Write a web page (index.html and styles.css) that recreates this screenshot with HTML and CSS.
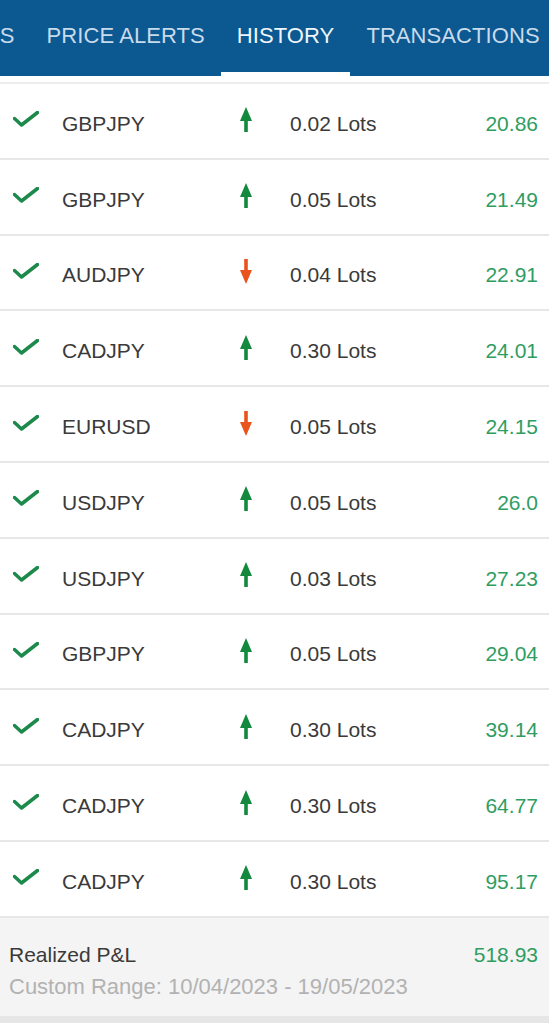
FILE: index.html
```html
<!DOCTYPE html>
<html lang="en">
<head>
    <meta charset="UTF-8">
    <meta name="viewport" content="width=device-width, initial-scale=1.0">
    <title>History</title>
    <link rel="stylesheet" href="styles.css">
</head>
<body>
    <header class="tabbar">
        <nav class="tabs">
            <div class="tab tab-first">POSITIONS</div>
            <div class="tab">PRICE ALERTS</div>
            <div class="tab active">HISTORY</div>
            <div class="tab">TRANSACTIONS</div>
        </nav>
    </header>

    <div class="history-list">
        <div class="trade">
            <svg class="check" viewBox="0 0 26 16"><polyline points="1.5,7.5 8.5,14 24.5,1.5"/></svg>
            <span class="symbol">GBPJPY</span>
            <svg class="dir up" viewBox="0 0 12 25"><polygon points="6,0 12,14 7.8,14 7.8,25 4.2,25 4.2,14 0,14"/></svg>
            <span class="lots">0.02 Lots</span>
            <span class="pnl">20.86</span>
        </div>
        <div class="trade">
            <svg class="check" viewBox="0 0 26 16"><polyline points="1.5,7.5 8.5,14 24.5,1.5"/></svg>
            <span class="symbol">GBPJPY</span>
            <svg class="dir up" viewBox="0 0 12 25"><polygon points="6,0 12,14 7.8,14 7.8,25 4.2,25 4.2,14 0,14"/></svg>
            <span class="lots">0.05 Lots</span>
            <span class="pnl">21.49</span>
        </div>
        <div class="trade">
            <svg class="check" viewBox="0 0 26 16"><polyline points="1.5,7.5 8.5,14 24.5,1.5"/></svg>
            <span class="symbol">AUDJPY</span>
            <svg class="dir down" viewBox="0 0 12 25"><polygon points="6,25 12,11 7.8,11 7.8,0 4.2,0 4.2,11 0,11"/></svg>
            <span class="lots">0.04 Lots</span>
            <span class="pnl">22.91</span>
        </div>
        <div class="trade">
            <svg class="check" viewBox="0 0 26 16"><polyline points="1.5,7.5 8.5,14 24.5,1.5"/></svg>
            <span class="symbol">CADJPY</span>
            <svg class="dir up" viewBox="0 0 12 25"><polygon points="6,0 12,14 7.8,14 7.8,25 4.2,25 4.2,14 0,14"/></svg>
            <span class="lots">0.30 Lots</span>
            <span class="pnl">24.01</span>
        </div>
        <div class="trade">
            <svg class="check" viewBox="0 0 26 16"><polyline points="1.5,7.5 8.5,14 24.5,1.5"/></svg>
            <span class="symbol">EURUSD</span>
            <svg class="dir down" viewBox="0 0 12 25"><polygon points="6,25 12,11 7.8,11 7.8,0 4.2,0 4.2,11 0,11"/></svg>
            <span class="lots">0.05 Lots</span>
            <span class="pnl">24.15</span>
        </div>
        <div class="trade">
            <svg class="check" viewBox="0 0 26 16"><polyline points="1.5,7.5 8.5,14 24.5,1.5"/></svg>
            <span class="symbol">USDJPY</span>
            <svg class="dir up" viewBox="0 0 12 25"><polygon points="6,0 12,14 7.8,14 7.8,25 4.2,25 4.2,14 0,14"/></svg>
            <span class="lots">0.05 Lots</span>
            <span class="pnl">26.0</span>
        </div>
        <div class="trade">
            <svg class="check" viewBox="0 0 26 16"><polyline points="1.5,7.5 8.5,14 24.5,1.5"/></svg>
            <span class="symbol">USDJPY</span>
            <svg class="dir up" viewBox="0 0 12 25"><polygon points="6,0 12,14 7.8,14 7.8,25 4.2,25 4.2,14 0,14"/></svg>
            <span class="lots">0.03 Lots</span>
            <span class="pnl">27.23</span>
        </div>
        <div class="trade">
            <svg class="check" viewBox="0 0 26 16"><polyline points="1.5,7.5 8.5,14 24.5,1.5"/></svg>
            <span class="symbol">GBPJPY</span>
            <svg class="dir up" viewBox="0 0 12 25"><polygon points="6,0 12,14 7.8,14 7.8,25 4.2,25 4.2,14 0,14"/></svg>
            <span class="lots">0.05 Lots</span>
            <span class="pnl">29.04</span>
        </div>
        <div class="trade">
            <svg class="check" viewBox="0 0 26 16"><polyline points="1.5,7.5 8.5,14 24.5,1.5"/></svg>
            <span class="symbol">CADJPY</span>
            <svg class="dir up" viewBox="0 0 12 25"><polygon points="6,0 12,14 7.8,14 7.8,25 4.2,25 4.2,14 0,14"/></svg>
            <span class="lots">0.30 Lots</span>
            <span class="pnl">39.14</span>
        </div>
        <div class="trade">
            <svg class="check" viewBox="0 0 26 16"><polyline points="1.5,7.5 8.5,14 24.5,1.5"/></svg>
            <span class="symbol">CADJPY</span>
            <svg class="dir up" viewBox="0 0 12 25"><polygon points="6,0 12,14 7.8,14 7.8,25 4.2,25 4.2,14 0,14"/></svg>
            <span class="lots">0.30 Lots</span>
            <span class="pnl">64.77</span>
        </div>
        <div class="trade">
            <svg class="check" viewBox="0 0 26 16"><polyline points="1.5,7.5 8.5,14 24.5,1.5"/></svg>
            <span class="symbol">CADJPY</span>
            <svg class="dir up" viewBox="0 0 12 25"><polygon points="6,0 12,14 7.8,14 7.8,25 4.2,25 4.2,14 0,14"/></svg>
            <span class="lots">0.30 Lots</span>
            <span class="pnl">95.17</span>
        </div>
    </div>

    <footer class="summary">
        <div class="summary-row">
            <span class="summary-label">Realized P&amp;L</span>
            <span class="summary-value">518.93</span>
        </div>
        <div class="summary-range">Custom Range: 10/04/2023 - 19/05/2023</div>
    </footer>
    <div class="bottom-strip"></div>
</body>
</html>
```

FILE: styles.css
```css
:root {
    --blue: #0c5891;
    --text: #3a3a3a;
    --green: #2f9d62;
    --check: #1d8a4c;
    --up: #12893d;
    --down: #e9531d;
    --line: #e7e7e7;
}

* {
    box-sizing: border-box;
    margin: 0;
    padding: 0;
}

body {
    font-family: 'Liberation Sans', Arial, sans-serif;
    color: var(--text);
    background-color: white;
    width: 549px;
    height: 1023px;
    overflow: hidden;
}

/* tab strip is scrolled sideways, only the tail of the first tab shows */
.tabbar {
    background-color: var(--blue);
    height: 76px;
    overflow: hidden;
}

.tabs {
    display: flex;
    height: 76px;
    margin-left: -122px;
}

.tab {
    flex: none;
    padding: 0 16px;
    height: 76px;
    line-height: 72px;
    font-size: 22px;
    letter-spacing: 0.08px;
    color: #c8dbeb;
    border-bottom: 4px solid transparent;
    white-space: nowrap;
}

.tab.active {
    color: #eef6fb;
    border-bottom-color: white;
}

.history-list {
    margin-top: 6px;
    border-top: 2px solid #ededed;
}

.trade {
    display: grid;
    grid-template-columns: 49px 178px 50px 1fr auto;
    align-items: center;
    height: 75.8px;
    padding: 0 11px 0 13px;
    border-bottom: 2px solid var(--line);
    font-size: 21px;
}

.trade span {
    padding-top: 6px;
}

.check {
    width: 26px;
    height: 16px;
    margin-top: -3px;
    fill: none;
    stroke: var(--check);
    stroke-width: 3.5;
    stroke-linecap: round;
    stroke-linejoin: round;
}

.dir {
    width: 12px;
    height: 25px;
    margin-top: -2px;
}

.dir.up {
    fill: var(--up);
}

.dir.down {
    fill: var(--down);
}

.pnl {
    color: var(--green);
    text-align: right;
}

.summary {
    background-color: #f4f4f4;
    height: 98px;
    padding: 22px 11px 0 9px;
    font-size: 21px;
}

.summary-row {
    display: flex;
    justify-content: space-between;
    line-height: 30px;
}

.summary-value {
    color: var(--green);
}

.summary-range {
    margin-top: 2px;
    line-height: 30px;
    font-size: 22px;
    color: #b2b2b2;
}

.bottom-strip {
    height: 8px;
    background-color: #e6e6e6;
}
```
